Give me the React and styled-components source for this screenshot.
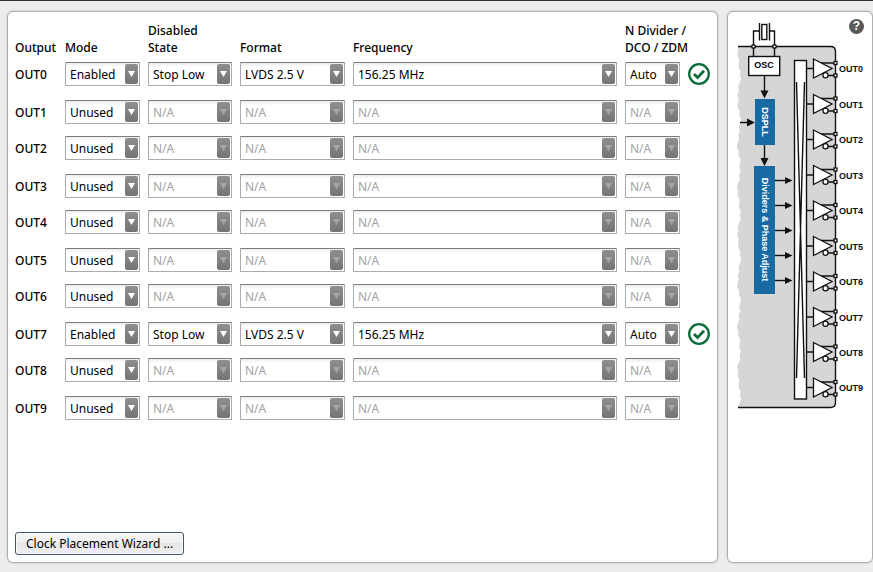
import React, { useState } from "react";
import styled, { createGlobalStyle } from "styled-components";

const GlobalStyle = createGlobalStyle`
  * { box-sizing: border-box; }
  body {
    margin: 0;
    background: #ececec;
    color: #000;
    font: 12px/17px "Noto Sans", "Open Sans", sans-serif;
  }
`;

const Page = styled.div`
  display: flex;
  gap: 9px;
  min-height: 100vh;
  padding: 10px 0 9px 7px;
  border-top: 1px solid #332f33;
`;

const Panel = styled.section`
  background: #fff;
  border: 1px solid #b0b0b0;
  border-radius: 6px;
  box-shadow: 0 0 2px rgba(0, 0, 0, 0.25);
`;

const OutputsPanel = styled(Panel)`
  flex: 1;
  min-width: 0;
  display: flex;
  flex-direction: column;
  justify-content: space-between;
  align-items: flex-start;
  padding: 10px 7px 7px;
`;

const DiagramPanel = styled(Panel)`
  position: relative;
  flex: 0 0 146px;
  padding: 8px 6px 8px 8px;
`;

const OutputTable = styled.table`
  width: 100%;
  table-layout: fixed;
  border-collapse: collapse;
`;

const Col = styled.col`
  width: ${(p) => p.$width};
`;

const HeaderCell = styled.th`
  padding: 0 0 6px;
  text-align: left;
  vertical-align: bottom;
  font-weight: 500;
  white-space: nowrap;
`;

const OutputRow = styled.tr`
  height: 36px;
  &:nth-child(odd) { height: 38px; }
`;

const RowLabel = styled.th`
  padding: 4px 0 0;
  text-align: left;
  vertical-align: top;
  font-weight: 500;
`;

const Cell = styled.td`
  padding: 0 8px 0 0;
  vertical-align: top;
`;

const StatusCell = styled.td`
  padding: 1px 0 0;
  vertical-align: top;
`;

const SelectBox = styled.div`
  display: grid;
  align-items: center;
  & > * { grid-area: 1 / 1; }
`;

const SelectInput = styled.select`
  appearance: none;
  width: 100%;
  height: 24px;
  margin: 0;
  padding: 0 16px 0 4px;
  border: 1px solid #ababab;
  border-top-color: #7c7c7c;
  border-radius: 1px;
  background: linear-gradient(#ececec, #fff 4px);
  color: #000;
  font: inherit;
  &:disabled { color: #a3a3a3; opacity: 1; }
`;

const ArrowBox = styled.span`
  justify-self: end;
  display: grid;
  place-items: center;
  width: 13px;
  height: 20px;
  margin-right: 2px;
  border-radius: 2px;
  background: linear-gradient(#8f8f8f, #747474);
  color: ${(p) => (p.$disabled ? "#a6a6a6" : "#fff")};
  pointer-events: none;
`;

const WizardButton = styled.button`
  height: 23px;
  padding: 0 10px;
  border: 1px solid #44546b;
  border-radius: 3px;
  background: linear-gradient(#f5f5f5, #f0f0f0 50%, #e6e6e6 50%, #eee);
  box-shadow: inset 0 0 0 1px #fafafa;
  color: #000;
  font: inherit;
  white-space: nowrap;
`;

const HelpButton = styled.button`
  position: absolute;
  top: 7px;
  right: 8px;
  width: 15px;
  height: 15px;
  padding: 0;
  border: 0;
  border-radius: 50%;
  background: #5a5a5a;
  color: #fff;
  font: bold 12px/15px "Liberation Sans", Arial, sans-serif;
`;

const Drawing = styled.svg`
  display: block;
  width: 130px;
  font: bold 9px "Liberation Sans", Arial, sans-serif;
`;

const CheckMark = styled.svg`
  display: block;
`;

function Select({ label, value, options }) {
  const [current, setCurrent] = useState(value);
  const disabled = value === "N/A";
  return (
    <SelectBox>
      <SelectInput
        aria-label={label}
        value={current}
        disabled={disabled}
        onChange={(e) => setCurrent(e.target.value)}
      >
        {(disabled ? ["N/A"] : options).map((o) => (
          <option key={o}>{o}</option>
        ))}
      </SelectInput>
      <ArrowBox $disabled={disabled}>
        <svg width="7" height="6" viewBox="0 0 7 6" aria-hidden="true">
          <path d="M0 0h7L3.5 6z" fill="currentColor" />
        </svg>
      </ArrowBox>
    </SelectBox>
  );
}

function ValidIcon() {
  return (
    <CheckMark width="22" height="22" viewBox="0 0 22 22" role="img" aria-label="Valid">
      <circle cx="11" cy="11" r="9.8" fill="#fff" stroke="#0b6b3a" strokeWidth="2.3" />
      <path d="M6 11l3.6 3.6 6.4-6.8" fill="none" stroke="#0b6b3a" strokeWidth="2.8" />
    </CheckMark>
  );
}

const columns = [
  { key: "mode", label: "Mode", options: ["Enabled", "Unused"] },
  { key: "state", label: "Disabled State", options: ["Stop Low", "Stop High"] },
  { key: "format", label: "Format", options: ["LVDS 2.5 V", "LVDS 3.3 V"] },
  { key: "frequency", label: "Frequency", options: ["156.25 MHz"] },
  { key: "divider", label: "N Divider / DCO / ZDM", options: ["Auto", "N0", "N1"] },
];

const enabled = {
  mode: "Enabled",
  state: "Stop Low",
  format: "LVDS 2.5 V",
  frequency: "156.25 MHz",
  divider: "Auto",
};
const unused = { mode: "Unused", state: "N/A", format: "N/A", frequency: "N/A", divider: "N/A" };

const outputs = Array.from({ length: 10 }, (_, i) => ({
  name: `OUT${i}`,
  ...(i === 0 || i === 7 ? enabled : unused),
}));

const bufferCentres = [68.5, 104, 139.5, 175, 210.5, 246, 281.5, 317, 352, 387.5];
const dividerArrows = [180.5, 205.5, 230.5, 255.5, 280.5];

// Torn left edge of the chip body, drawn from bottom to top.
const tornEdge = Array.from({ length: 90 }, (_, i) => {
  const y = 407 - i * 4;
  const x = 738 + ((i * 7) % 5) * 0.5 + Math.sin(i * 0.55) * 1.3;
  return `L${x.toFixed(1)} ${y}`;
}).join("");

function OutputBuffer({ y, name }) {
  return (
    <g transform={`translate(0 ${y})`} fill="#fff" stroke="#111" strokeWidth="1.3">
      <path d="M807 0h6M821 -5.5h14M828 7h7" />
      <path d="M813.5 -9.5L832 0L813.5 9.5z" />
      <circle cx="825.5" cy="6.8" r="2.6" />
      <rect x="834" y="-7" width="3" height="3" />
      <rect x="834" y="5.5" width="3" height="3" />
      <text x="839" y="3.5" fill="#111" stroke="none">{name}</text>
    </g>
  );
}

function ClockDiagram() {
  return (
    <Drawing viewBox="736 20 130 392" role="img" aria-label="Clock block diagram">
      <path d={`M738 46.5H830.5q5 0 5 5V402.5q0 5 -5 5H738${tornEdge}z`} fill="#d6d6d6" />
      <g fill="none" stroke="#111" strokeWidth="1.4">
        <path d="M738 46.5H830.5q5 0 5 5V402.5q0 5 -5 5H738" />
        <path d="M753.5 56V31h6M774.5 56V31h-5M759.5 23v17.5M769.5 23v17.5" />
        <rect x="761.8" y="24.5" width="5" height="15" fill="#fff" />
        <circle cx="753.5" cy="46.5" r="1.8" fill="#fff" />
        <circle cx="774.5" cy="46.5" r="1.8" fill="#fff" />
        <rect x="748.7" y="56.5" width="31" height="19" fill="#fff" />
        <path d="M764.5 75.5V92M764.5 145V160M740 122.5h8" />
        {dividerArrows.map((y) => <path key={y} d={`M775 ${y}h11`} />)}
        <rect x="794.5" y="60.5" width="12" height="338.5" fill="#fff" />
        <path d="M796.5 82L804.5 378M804.5 82L796.5 378" />
      </g>
      <g fill="#111">
        <path d="M760.5 90.5h8l-4 8zM760.5 158h8l-4 8zM747 118.5v8l8 -4z" />
        {dividerArrows.map((y) => <path key={y} d={`M785 ${y - 3.5}v7l7.5 -3.5z`} />)}
      </g>
      <rect x="755" y="99" width="20" height="46" fill="#176aa2" />
      <rect x="754" y="166" width="21" height="128" fill="#176aa2" />
      <g textAnchor="middle">
        <text x="764" y="68">OSC</text>
        <text transform="translate(761.5 122) rotate(90)" fill="#fff">DSPLL</text>
        <text transform="translate(761.5 229.5) rotate(90)" fill="#fff">Dividers &amp; Phase Adjust</text>
      </g>
      {bufferCentres.map((y, i) => <OutputBuffer key={y} y={y} name={`OUT${i}`} />)}
    </Drawing>
  );
}

export default function App() {
  return (
    <>
      <GlobalStyle />
      <Page>
        <OutputsPanel>
          <OutputTable>
            <colgroup>
              <Col $width="50px" />
              <Col $width="83px" />
              <Col $width="92px" />
              <Col $width="113px" />
              <Col $width="auto" />
              <Col $width="63px" />
              <Col $width="22px" />
            </colgroup>
            <thead>
              <tr>
                <HeaderCell>Output</HeaderCell>
                <HeaderCell>Mode</HeaderCell>
                <HeaderCell>Disabled<br />State</HeaderCell>
                <HeaderCell>Format</HeaderCell>
                <HeaderCell>Frequency</HeaderCell>
                <HeaderCell colSpan={2}>N Divider /<br />DCO / ZDM</HeaderCell>
              </tr>
            </thead>
            <tbody>
              {outputs.map((row) => (
                <OutputRow key={row.name}>
                  <RowLabel scope="row">{row.name}</RowLabel>
                  {columns.map((c) => (
                    <Cell key={c.key}>
                      <Select label={`${row.name} ${c.label}`} value={row[c.key]} options={c.options} />
                    </Cell>
                  ))}
                  <StatusCell>{row.mode === "Enabled" && <ValidIcon />}</StatusCell>
                </OutputRow>
              ))}
            </tbody>
          </OutputTable>
          <WizardButton type="button">Clock Placement Wizard ...</WizardButton>
        </OutputsPanel>
        <DiagramPanel>
          <ClockDiagram />
          <HelpButton type="button" aria-label="Help">?</HelpButton>
        </DiagramPanel>
      </Page>
    </>
  );
}
